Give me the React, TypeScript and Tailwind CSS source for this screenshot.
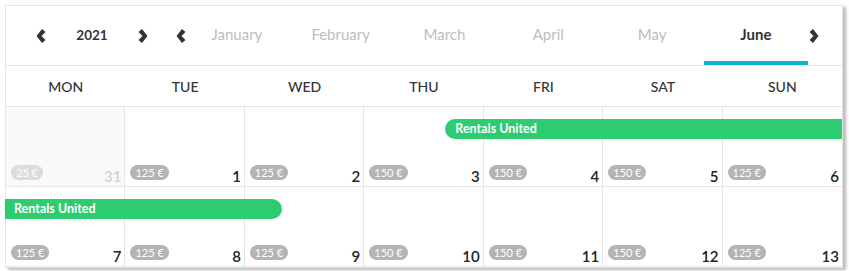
import React from 'react';

const months = ['January', 'February', 'March', 'April', 'May', 'June'];
const dayNames = ['MON', 'TUE', 'WED', 'THU', 'FRI', 'SAT', 'SUN'];

interface Day {
  day: number;
  price: number;
  outside?: boolean;
}

const weeks: Day[][] = [
  [
    { day: 31, price: 25, outside: true },
    { day: 1, price: 125 },
    { day: 2, price: 125 },
    { day: 3, price: 150 },
    { day: 4, price: 150 },
    { day: 5, price: 150 },
    { day: 6, price: 125 }
  ],
  [
    { day: 7, price: 125 },
    { day: 8, price: 125 },
    { day: 9, price: 125 },
    { day: 10, price: 150 },
    { day: 11, price: 150 },
    { day: 12, price: 150 },
    { day: 13, price: 125 }
  ]
];

function Chevron({ dir }: { dir: 'left' | 'right' }) {
  return <svg width="11" height="14" viewBox="0 0 11 14" className="shrink-0">
      {dir === 'left' ? <polygon points="6,0 9.5,3 5.5,7 9.5,11 6,14 0.5,7" fill="#333" /> : <polygon points="5,0 10.5,7 5,14 1.5,11 5.5,7 1.5,3" fill="#333" />}
    </svg>;
}

function DayCell({ d, last }: { d: Day; last: boolean }) {
  return <div className={`h-[80px] border-b border-[#e6e6e6] flex items-end justify-between pl-[5px] pr-[3px] pb-[1px] ${last ? '' : 'border-r'} ${d.outside ? 'bg-[#f9f9f9]' : 'bg-white'}`}>
      <span className={`mb-[5px] rounded-full px-[5px] text-[11px] leading-[15px] text-white ${d.outside ? 'bg-[#dcdcdc]' : 'bg-[#b4b4b4]'}`}>
        {d.price} €
      </span>
      <span className={`text-[15px] leading-[18px] font-semibold ${d.outside ? 'text-[#d2d2d2]' : 'text-[#222]'}`}>
        {d.day}
      </span>
    </div>;
}

export default function App() {
  return <div className="pt-[5px] pl-[5px] bg-white w-[849px] h-[271px] overflow-hidden" style={{ fontFamily: 'Lato, "Open Sans", sans-serif' }}>
      <div className="w-[838px] border border-[#e6e6e6] bg-white shadow-[3px_2px_3px_rgba(0,0,0,0.28)]">
        {/* month navigation */}
        <div className="h-[60px] border-b border-[#e6e6e6] flex items-stretch">
          <div className="flex items-center pl-[30px]">
            <Chevron dir="left" />
            <span className="w-[90px] text-center text-[13.5px] font-bold text-[#333]">2021</span>
            <Chevron dir="right" />
            <span className="ml-[28px]">
              <Chevron dir="left" />
            </span>
          </div>
          <div className="flex -ml-[2px]">
            {months.map(m => <div key={m} className={`w-[103.8px] flex items-center justify-center text-[15px] border-b-4 ${m === 'June' ? 'border-[#16b1d2] text-[#333] font-bold' : 'border-transparent text-[#bdbdbd]'}`}>
                <span className="mt-[2px]">{m}</span>
              </div>)}
          </div>
          <div className="flex items-center">
            <Chevron dir="right" />
          </div>
        </div>

        {/* weekday header */}
        <div className="grid grid-cols-7 h-[41px] border-b border-[#e6e6e6]">
          {dayNames.map(n => <div key={n} className="flex items-center justify-center text-[14px] text-[#333] font-medium">
              {n}
            </div>)}
        </div>

        {/* weeks */}
        {weeks.map((week, wi) => <div key={wi} className="grid">
            <div className="col-start-1 row-start-1 grid grid-cols-7">
              {week.map((d, i) => <DayCell key={i} d={d} last={i === 6} />)}
            </div>
            <div className="col-start-1 row-start-1 grid grid-cols-7 items-start">
              {wi === 0 ? <div className="col-start-4 col-end-8 ml-[81px] mt-[12px] h-[20px] rounded-l-full bg-[#2ecc71] pl-[10px] text-[12.5px] leading-[20px] font-bold text-white">
                  Rentals United
                </div> : <div className="col-start-1 col-end-4 -ml-px mr-[82px] mt-[12px] h-[20px] rounded-r-full bg-[#2ecc71] pl-[9px] text-[12.5px] leading-[20px] font-bold text-white">
                  Rentals United
                </div>}
            </div>
          </div>)}
      </div>
    </div>;
}
